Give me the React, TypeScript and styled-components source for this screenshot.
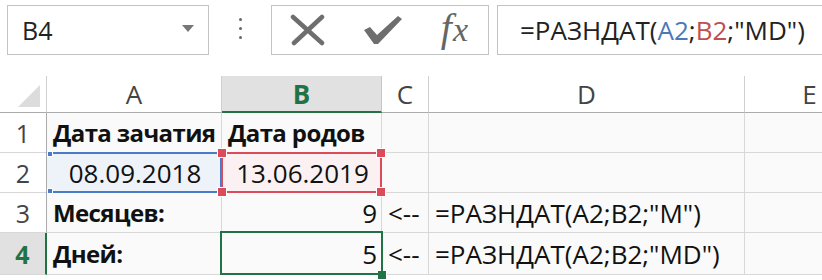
import React from 'react';
import styled, { createGlobalStyle, css } from 'styled-components';

const GlobalStyle = createGlobalStyle`
  body {
    margin: 0;
    background: #fff;
    font-family: "Open Sans", "Noto Sans", sans-serif;
    overflow: hidden;
  }
`;

const Page = styled.div`
  width: 822px;
  height: 280px;
  overflow: hidden;
  background: #fff;
`;

const FormulaBar = styled.div`
  display: flex;
  align-items: stretch;
  padding: 5px 0 0 7px;
  height: 50px;
`;

const NameBox = styled.div`
  width: 202px;
  border: 1px solid #c3c3c3;
  display: flex;
  align-items: center;
  justify-content: space-between;
  padding: 0 14px 0 14px;
  box-sizing: border-box;
  font-size: 25px;
  color: #222;
  background: #fff;
`;

const Caret = styled.span`
  width: 0;
  height: 0;
  border-left: 6px solid transparent;
  border-right: 6px solid transparent;
  border-top: 7px solid #777;
  margin-top: -3px;
`;

const Dots = styled.div`
  width: 62px;
  display: flex;
  flex-direction: column;
  align-items: center;
  justify-content: center;
  gap: 6px;
  padding-bottom: 4px;
  span {
    width: 3px;
    height: 3px;
    border-radius: 50%;
    background: #666;
  }
`;

const FxBox = styled.div`
  width: 218px;
  border: 1px solid #c3c3c3;
  box-sizing: border-box;
  display: flex;
  align-items: center;
  justify-content: space-between;
  padding: 0 20px 0 18px;
`;

const FxText = styled.span`
  font-family: "Liberation Serif", "DejaVu Serif", serif;
  font-style: italic;
  font-size: 40px;
  line-height: 1;
  color: #666;
  margin-top: -4px;
  span {
    font-size: 34px;
    margin-left: 1px;
  }
`;

const FormulaInput = styled.div`
  flex: 1;
  margin-left: 8px;
  border: 1px solid #c3c3c3;
  border-right: none;
  display: flex;
  align-items: center;
  padding-left: 22px;
  font-size: 26px;
  color: #222;
`;

const Ref = styled.span<{ $c: string }>`
  color: ${(p) => p.$c};
`;

const Grid = styled.div`
  margin-top: 21px;
  display: grid;
  grid-template-columns: 47px 175px 160px 47px 316px 130px;
  grid-template-rows: 37px 40px 40px 40px 42px;
  background: #fafafa;
`;

const ColHead = styled.div<{ $active?: boolean }>`
  display: flex;
  align-items: center;
  justify-content: center;
  font-size: 26px;
  color: #444;
  background: #fff;
  border-right: 1px solid #d0d0d0;
  border-bottom: 1px solid #ababab;
  box-sizing: border-box;
  ${(p) =>
    p.$active &&
    css`
      background: #e1e1e1;
      color: #217346;
      font-weight: 700;
      border-bottom: 2px solid #217346;
      border-right-color: #c6c6c6;
    `}
`;

const Corner = styled.div`
  background: #fff;
  border-right: 1px solid #d0d0d0;
  border-bottom: 1px solid #ababab;
  box-sizing: border-box;
  position: relative;
  &::after {
    content: '';
    position: absolute;
    right: 6px;
    bottom: 5px;
    width: 0;
    height: 0;
    border-left: 22px solid transparent;
    border-bottom: 22px solid #dcdcdc;
  }
`;

const RowHead = styled.div<{ $active?: boolean }>`
  display: flex;
  align-items: center;
  justify-content: center;
  font-size: 25px;
  color: #444;
  background: #fff;
  border-right: 1px solid #ababab;
  border-bottom: 1px solid #d8d8d8;
  box-sizing: border-box;
  ${(p) =>
    p.$active &&
    css`
      background: #e1e1e1;
      color: #217346;
      font-weight: 700;
      border-right: 2px solid #217346;
    `}
`;

const Cell = styled.div<{ $align?: 'left' | 'center' | 'right'; $bold?: boolean; $tint?: string }>`
  position: relative;
  display: flex;
  align-items: center;
  justify-content: ${(p) =>
    p.$align === 'right' ? 'flex-end' : p.$align === 'center' ? 'center' : 'flex-start'};
  padding: 0 4px 0 6px;
  font-size: ${(p) => (p.$bold ? '24px' : '26px')};
  font-weight: ${(p) => (p.$bold ? 700 : 400)};
  letter-spacing: ${(p) => (p.$bold ? '-0.6px' : '0')};
  color: #111;
  background: ${(p) => p.$tint || 'transparent'};
  border-right: 1px solid #d8d8d8;
  border-bottom: 1px solid #d8d8d8;
  box-sizing: border-box;
  white-space: nowrap;
`;

const RangeBox = styled.div<{ $c: string; $noLeft?: boolean }>`
  position: absolute;
  inset: -1px -1px -1px -1px;
  border: 2px solid ${(p) => p.$c};
  ${(p) => p.$noLeft && 'border-left-color: transparent;'}
  pointer-events: none;
  z-index: 2;
`;

const Handle = styled.div<{ $c: string; $pos: string; $size?: number }>`
  position: absolute;
  width: ${(p) => p.$size ?? 8}px;
  height: ${(p) => p.$size ?? 8}px;
  background: ${(p) => p.$c};
  border: 1px solid #fff;
  z-index: 3;
  ${(p) => p.$pos}
`;

const ActiveBox = styled.div`
  position: absolute;
  inset: -2px -2px -1px -2px;
  border: 2px solid #217346;
  z-index: 4;
  pointer-events: none;
`;

const XIcon = () => (
  <svg width="36" height="32" viewBox="0 0 36 32">
    <path d="M3 3 L32 29 M32 3 L4 29" stroke="#6e6e6e" strokeWidth="4.5" strokeLinecap="round" fill="none" />
  </svg>
);

const CheckIcon = () => (
  <svg width="42" height="34" viewBox="0 0 42 34">
    <path d="M2 17 L8 14 L15 22 L36 3 L40 6 L16 31 L12 31 Z" fill="#6e6e6e" />
  </svg>
);

const blue = '#4a7bc8';
const red = '#dc4b5a';

export default function App() {
  return (
    <Page>
      <GlobalStyle />
      <FormulaBar>
        <NameBox>
          B4
          <Caret />
        </NameBox>
        <Dots>
          <span />
          <span />
          <span />
        </Dots>
        <FxBox>
          <XIcon />
          <CheckIcon />
          <FxText>
            f<span>x</span>
          </FxText>
        </FxBox>
        <FormulaInput>
          =РАЗНДАТ(<Ref $c="#4a78b8">A2</Ref>;<Ref $c="#c0504d">B2</Ref>;"MD")
        </FormulaInput>
      </FormulaBar>
      <Grid>
        <Corner />
        <ColHead>A</ColHead>
        <ColHead $active>B</ColHead>
        <ColHead>C</ColHead>
        <ColHead>D</ColHead>
        <ColHead>E</ColHead>

        <RowHead>1</RowHead>
        <Cell $bold>Дата зачатия</Cell>
        <Cell $bold>Дата родов</Cell>
        <Cell />
        <Cell />
        <Cell />

        <RowHead>2</RowHead>
        <Cell $align="center" $tint="#eef2f9">
          <RangeBox $c={blue} $noLeft />
          <Handle $c={blue} $size={4} $pos="left: 0px; top: -2px;" />
          <Handle $c={blue} $size={4} $pos="left: 0px; bottom: -2px;" />
          08.09.2018
        </Cell>
        <Cell $align="center" $tint="#fbf1f2">
          <RangeBox $c={red} />
          <Handle $c={red} $pos="left: -5px; top: -5px;" />
          <Handle $c={red} $pos="right: -5px; top: -5px;" />
          <Handle $c={red} $pos="left: -5px; bottom: -5px;" />
          <Handle $c={red} $pos="right: -5px; bottom: -5px;" />
          13.06.2019
        </Cell>
        <Cell />
        <Cell />
        <Cell />

        <RowHead>3</RowHead>
        <Cell $bold>Месяцев:</Cell>
        <Cell $align="right">9</Cell>
        <Cell>&lt;--</Cell>
        <Cell>=РАЗНДАТ(A2;B2;"M")</Cell>
        <Cell />

        <RowHead $active>4</RowHead>
        <Cell $bold>Дней:</Cell>
        <Cell $align="right">
          <ActiveBox />
          <Handle $c="#217346" $pos="right: -6px; bottom: -6px;" />
          5
        </Cell>
        <Cell>&lt;--</Cell>
        <Cell>=РАЗНДАТ(A2;B2;"MD")</Cell>
        <Cell />
      </Grid>
    </Page>
  );
}
